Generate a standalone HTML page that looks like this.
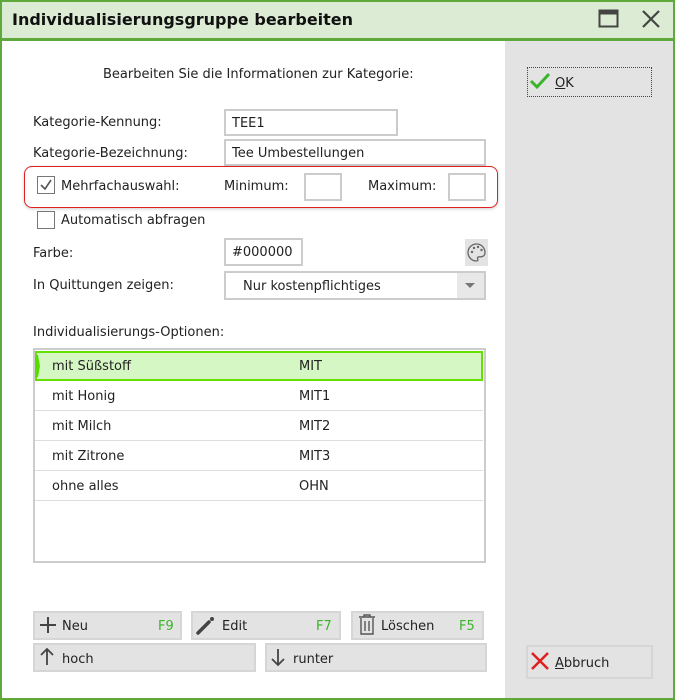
<!DOCTYPE html>
<html><head><meta charset="utf-8"><style>
*{box-sizing:border-box;margin:0;padding:0}
body{width:675px;height:700px;overflow:hidden;background:#fff;font-family:"DejaVu Sans","Liberation Sans",sans-serif;font-size:13px;color:#222;position:relative}
.a{position:absolute}
.t{position:absolute;white-space:nowrap;line-height:16px;margin-top:2px}
.inp{position:absolute;border:2px solid #ccc;background:#fff;padding-left:6px;line-height:25px}
.btn{position:absolute;background:#e3e3e3;border:2px solid #d6d6d6;line-height:24px}
.row{position:absolute;left:35px;width:448px;height:30px;border-bottom:1px solid #ddd;line-height:32px}
.row span{position:absolute}
.g{color:#3ab52a;position:absolute}
</style></head><body>
<div class="a" style="left:0;top:0;width:675px;height:700px;border:2px solid #5ea83c"></div>
<div class="a" style="left:2px;top:2px;width:671px;height:37px;background:#dcebd4"></div>
<div class="a" style="left:0;top:38px;width:675px;height:3px;background:#5ea83c"></div>
<div class="t" style="left:12px;top:8px;font-size:16px;font-weight:bold;line-height:20px;color:#111">Individualisierungsgruppe bearbeiten</div>
<svg class="a" style="left:598px;top:9px" width="22" height="20"><rect x="1.5" y="1.5" width="18" height="16" fill="none" stroke="#444" stroke-width="2"/><rect x="1.5" y="1.5" width="18" height="4" fill="#444"/></svg>
<svg class="a" style="left:641px;top:9px" width="20" height="20"><path d="M2 2L18 18M18 2L2 18" stroke="#444" stroke-width="2.2"/></svg>
<div class="a" style="left:505px;top:41px;width:168px;height:657px;background:#e3e3e3"></div>

<div class="t" style="left:103px;top:65px">Bearbeiten Sie die Informationen zur Kategorie:</div>
<div class="t" style="left:33px;top:113px">Kategorie-Kennung:</div>
<div class="inp" style="left:224px;top:109px;width:174px;height:27px">TEE1</div>
<div class="t" style="left:33px;top:144px">Kategorie-Bezeichnung:</div>
<div class="inp" style="left:224px;top:139px;width:262px;height:27px">Tee Umbestellungen</div>

<div class="a" style="left:24px;top:166px;width:474px;height:42px;border:1.5px solid #e02020;border-radius:8px;box-shadow:0 1px 3px rgba(0,0,0,.2)"></div>
<div class="a" style="left:37px;top:176px;width:18px;height:18px;border:1.5px solid #777;background:#fff"></div>
<svg class="a" style="left:39px;top:178px" width="14" height="14"><path d="M2 7L6 11L12 2" fill="none" stroke="#555" stroke-width="1.6"/></svg>
<div class="t" style="left:61px;top:177px">Mehrfachauswahl:</div>
<div class="t" style="left:224px;top:177px">Minimum:</div>
<div class="inp" style="left:304px;top:173px;width:38px;height:28px"></div>
<div class="t" style="left:368px;top:177px">Maximum:</div>
<div class="inp" style="left:448px;top:173px;width:38px;height:28px"></div>

<div class="a" style="left:37px;top:211px;width:18px;height:18px;border:1.5px solid #777;background:#fff"></div>
<div class="t" style="left:61px;top:211px">Automatisch abfragen</div>
<div class="t" style="left:33px;top:244px">Farbe:</div>
<div class="inp" style="left:224px;top:238px;width:79px;height:28px;line-height:26px">#000000</div>
<div class="a" style="left:465px;top:239px;width:23px;height:27px;background:#e3e3e3"></div>
<svg class="a" style="left:466px;top:242px" width="21" height="21"><path d="M10.5 2A8.5 8.5 0 0 0 10.5 19c1.5 0 1.8-1 1.2-2-.7-1 0-2.2 1.3-2.2H15a4 4 0 0 0 4-4C19 5.6 15.2 2 10.5 2z" fill="none" stroke="#666" stroke-width="1.3"/><circle cx="6" cy="10" r="1.2" fill="#666"/><circle cx="8" cy="6" r="1.2" fill="#666"/><circle cx="12" cy="5" r="1.2" fill="#666"/><circle cx="15.5" cy="8" r="1.2" fill="#666"/></svg>
<div class="t" style="left:33px;top:276px">In Quittungen zeigen:</div>
<div class="inp" style="left:224px;top:271px;width:262px;height:29px;padding-left:17px;line-height:27px">Nur kostenpflichtiges</div>
<div class="a" style="left:457px;top:273px;width:27px;height:25px;background:#e8e8e8"></div>
<svg class="a" style="left:464px;top:282px" width="12" height="8"><path d="M1 1H11L6 6z" fill="#777"/></svg>

<div class="t" style="left:33px;top:323px">Individualisierungs-Optionen:</div>
<div class="a" style="left:33px;top:348px;width:453px;height:215px;border:2px solid #ccc"></div>
<div class="row" style="top:351px;background:#d5f7c3;border:2px solid #66e000;line-height:28px"><span style="left:15px">mit Süßstoff</span><span style="left:262px">MIT</span></div>
<svg class="a" style="left:35px;top:355px" width="6" height="22"><path d="M0 0L3 0L5 11L3 22L0 22z" fill="#55dd00"/></svg>
<div class="row" style="top:381px"><span style="left:17px">mit Honig</span><span style="left:264px">MIT1</span></div>
<div class="row" style="top:411px"><span style="left:17px">mit Milch</span><span style="left:264px">MIT2</span></div>
<div class="row" style="top:441px"><span style="left:17px">mit Zitrone</span><span style="left:264px">MIT3</span></div>
<div class="row" style="top:471px"><span style="left:17px">ohne alles</span><span style="left:264px">OHN</span></div>

<div class="btn" style="left:33px;top:611px;width:149px;height:29px"></div>
<svg class="a" style="left:38px;top:615px" width="20" height="20"><path d="M10 2V18M2 10H18" stroke="#444" stroke-width="2"/></svg>
<div class="t" style="left:62px;top:617px">Neu</div><div class="g t" style="left:158px;top:617px">F9</div>
<div class="btn" style="left:191px;top:611px;width:150px;height:29px"></div>
<svg class="a" style="left:195px;top:614px" width="22" height="22"><path d="M3 19L14 8" stroke="#444" stroke-width="3.5" stroke-linecap="round"/><circle cx="17" cy="5" r="2" fill="#444"/></svg>
<div class="t" style="left:222px;top:617px">Edit</div><div class="g t" style="left:316px;top:617px">F7</div>
<div class="btn" style="left:351px;top:611px;width:133px;height:29px"></div>
<svg class="a" style="left:357px;top:613px" width="20" height="24"><path d="M2 4H18M7 4V2H13V4M4 5V21H16V5M8 8V18M12 8V18" fill="none" stroke="#555" stroke-width="1.4"/></svg>
<div class="t" style="left:381px;top:617px">Löschen</div><div class="g t" style="left:459px;top:617px">F5</div>
<div class="btn" style="left:33px;top:643px;width:223px;height:29px"></div>
<svg class="a" style="left:39px;top:647px" width="16" height="20"><path d="M8 2V18M2 8L8 2L14 8" fill="none" stroke="#444" stroke-width="1.8"/></svg>
<div class="t" style="left:62px;top:650px">hoch</div>
<div class="btn" style="left:265px;top:643px;width:222px;height:29px"></div>
<svg class="a" style="left:270px;top:647px" width="16" height="20"><path d="M8 2V18M2 12L8 18L14 12" fill="none" stroke="#444" stroke-width="1.8"/></svg>
<div class="t" style="left:293px;top:650px">runter</div>

<div class="a" style="left:527px;top:67px;width:125px;height:30px;border:1px dotted #444;background:#e3e3e3"></div>
<svg class="a" style="left:529px;top:71px" width="22" height="20"><path d="M2 10L8 16L20 3" fill="none" stroke="#3ab52a" stroke-width="3"/></svg>
<div class="t" style="left:555px;top:74px"><u>O</u>K</div>
<div class="a" style="left:526px;top:645px;width:127px;height:34px;border:2px solid #d6d6d6;background:#e3e3e3"></div>
<svg class="a" style="left:530px;top:651px" width="20" height="20"><path d="M2 2L18 18M18 2L2 18" stroke="#e02020" stroke-width="2.5"/></svg>
<div class="t" style="left:555px;top:654px"><u>A</u>bbruch</div>
</body></html>
